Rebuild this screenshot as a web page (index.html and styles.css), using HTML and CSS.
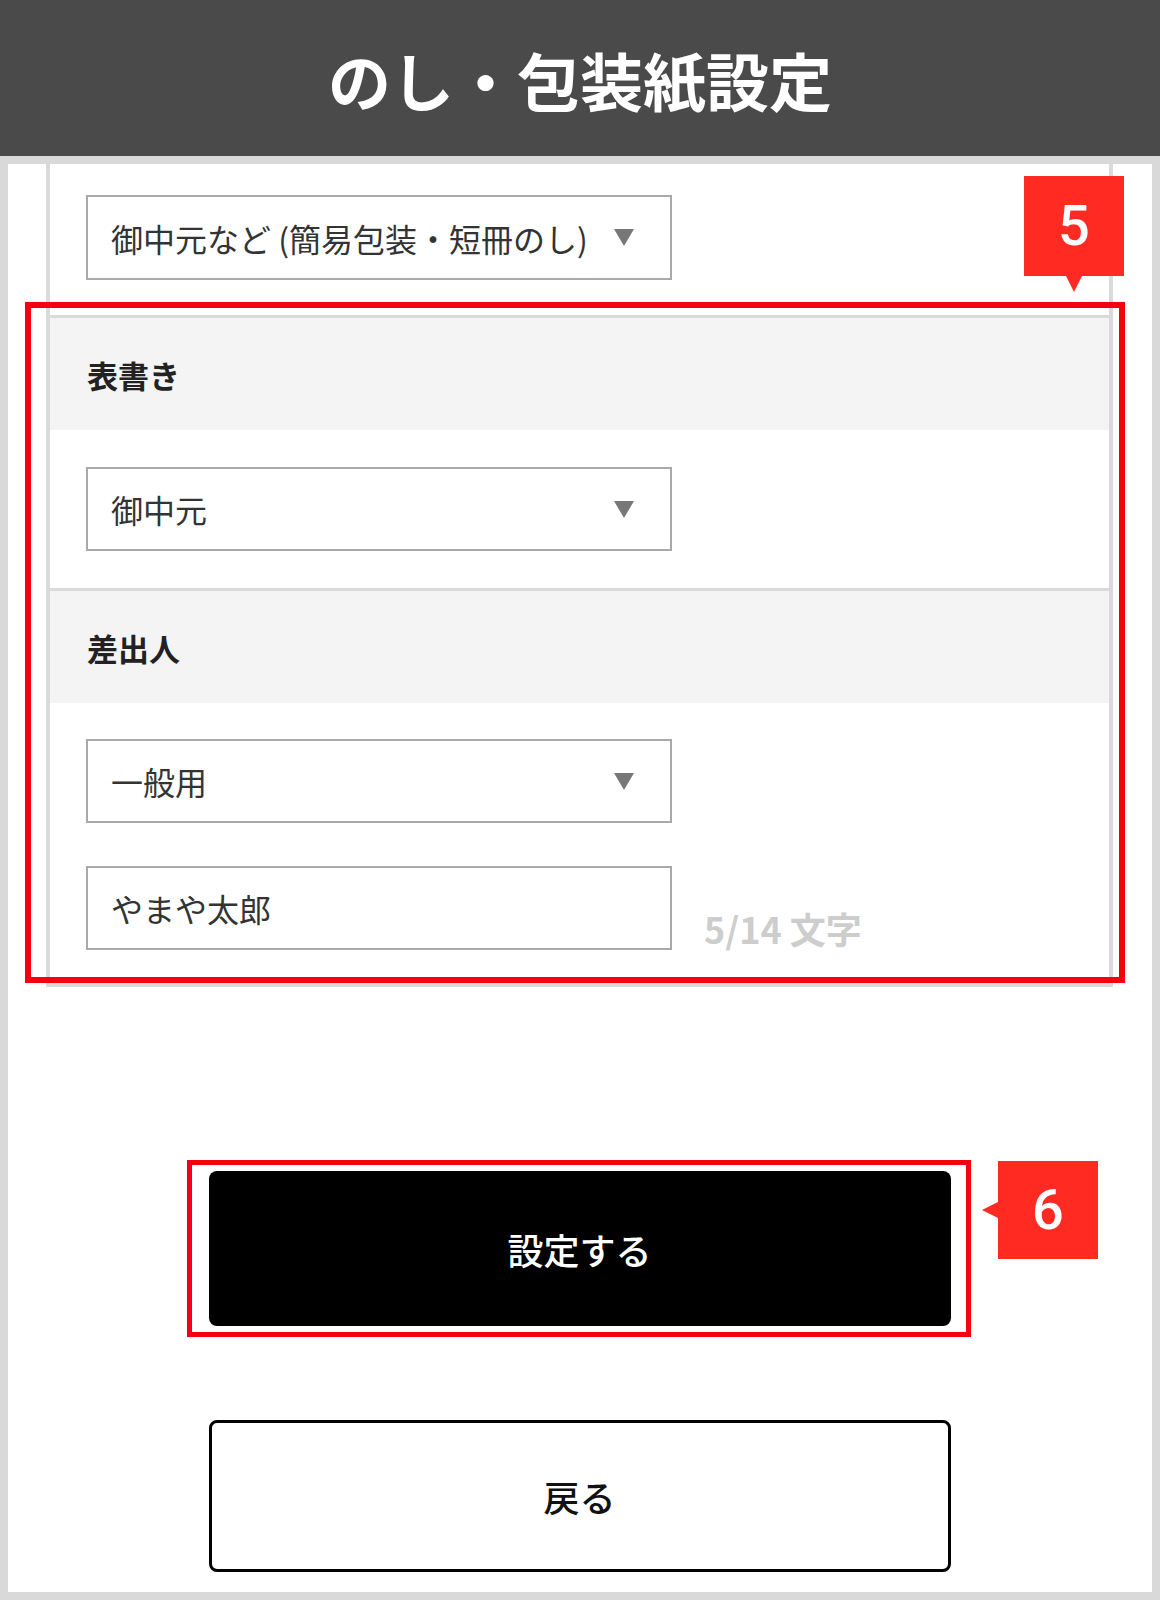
FILE: index.html
```
<!DOCTYPE html>
<html lang="ja">
<head>
    <meta charset="UTF-8">
    <title>のし・包装紙設定</title>
    <link rel="stylesheet" href="styles.css">
</head>
<body>
<div class="header">のし・包装紙設定</div>

<div class="page">
    <div class="form">
        <div class="top">
            <div class="select">
                <span>御中元など (簡易包装・短冊のし)</span>
                <i class="arrow"></i>
            </div>
        </div>

        <!--表書き-->
        <div class="sec-head">表書き</div>
        <div class="sec-body">
            <div class="select">
                <span>御中元</span>
                <i class="arrow"></i>
            </div>
        </div>

        <!--差出人-->
        <div class="sec-head">差出人</div>
        <div class="sec-body">
            <div class="select">
                <span>一般用</span>
                <i class="arrow"></i>
            </div>
            <div class="name-row">
                <div class="input">やまや太郎</div>
                <span class="count">5/14 文字</span>
            </div>
        </div>
    </div>

    <div class="actions">
        <div class="btn btn-submit">設定する</div>
        <div class="btn btn-back">戻る</div>
    </div>

    <!--注釈-->
    <div class="mark mark5"></div>
    <div class="badge badge5">5</div>
    <div class="mark mark6"></div>
    <div class="badge badge6">6</div>
</div>
</body>
</html>
```

FILE: styles.css
```
* {
    margin: 0;
    padding: 0;
    box-sizing: border-box;
}

body {
    background: #d9d9d9;
    font-family: "Noto Sans CJK JP", "Noto Sans", sans-serif;
    color: #333;
}

.header {
    height: 156px;
    background: #4a4a4a;
    color: #fff;
    font-size: 63px;
    font-weight: 700;
    display: flex;
    align-items: center;
    justify-content: center;
}

.page {
    position: relative;
    height: 1428px;
    margin: 8px;
    padding: 0 39px 0 38px;
    background: #fff;
}

.form {
    border: 4px solid #dadada;
    border-top: none;
}

.top {
    padding: 31px 36px 35px;
}

.select,
.input {
    width: 586px;
    height: 84px;
    border: 2px solid #a9a9a9;
    padding: 0 36px 0 23px;
    font-size: 32px;
    color: #333;
    display: flex;
    align-items: center;
    justify-content: space-between;
}

.top .select {
    height: 85px;
}

.arrow {
    width: 0;
    height: 0;
    border-left: 10px solid transparent;
    border-right: 10px solid transparent;
    border-top: 17px solid #777;
}

.sec-head {
    height: 115px;
    border-top: 3px solid #dadada;
    background: #f4f4f4;
    padding-left: 37px;
    font-size: 31px;
    font-weight: 700;
    color: #222;
    display: flex;
    align-items: center;
}

.sec-body {
    padding: 37px 36px;
}

.sec-body + .sec-head + .sec-body {
    padding: 36px 36px 33px;
}

.name-row {
    margin-top: 43px;
    display: flex;
    align-items: flex-end;
    gap: 32px;
}

.count {
    font-size: 36px;
    font-weight: 700;
    line-height: 1;
    color: #cdcdcd;
    margin-bottom: 4px;
}

.actions {
    margin-top: 184px;
    display: flex;
    flex-direction: column;
    align-items: center;
    gap: 94px;
}

.btn {
    width: 742px;
    display: flex;
    align-items: center;
    justify-content: center;
    font-size: 36px;
    font-weight: 500;
    border-radius: 8px;
}

.btn-submit {
    height: 155px;
    background: #000;
    color: #fff;
}

.btn-back {
    height: 152px;
    border: 3px solid #000;
    color: #111;
}

.mark {
    position: absolute;
    border: 6px solid #f50010;
}

.mark5 {
    left: 17px;
    top: 138px;
    width: 1100px;
    height: 681px;
}

.mark6 {
    left: 179px;
    top: 996px;
    width: 784px;
    height: 177px;
    border-width: 5px;
}

.badge {
    position: absolute;
    width: 100px;
    height: 100px;
    background: #ff2b22;
    color: #fff;
    font-family: Roboto, "Noto Sans", sans-serif;
    font-size: 56px;
    font-weight: 500;
    display: flex;
    align-items: center;
    justify-content: center;
}

.badge::after {
    content: "";
    position: absolute;
    width: 0;
    height: 0;
}

.badge5 {
    left: 1016px;
    top: 12px;
}

.badge5::after {
    left: 42px;
    bottom: -16px;
    border-left: 8px solid transparent;
    border-right: 8px solid transparent;
    border-top: 16px solid #ff2b22;
}

.badge6 {
    left: 990px;
    top: 997px;
    height: 98px;
}

.badge6::after {
    left: -16px;
    top: 41px;
    border-top: 8px solid transparent;
    border-bottom: 8px solid transparent;
    border-right: 16px solid #ff2b22;
}
```
